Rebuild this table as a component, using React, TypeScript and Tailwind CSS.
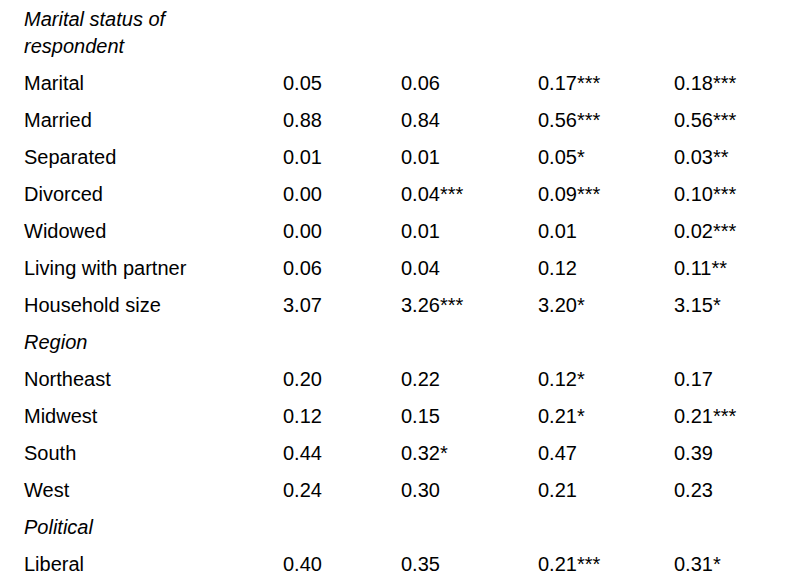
import React from "react";

type Row = { label: string; italic?: boolean; vals?: string[] };

const rows: Row[] = [
  { label: "Marital status of respondent", italic: true },
  { label: "Marital", vals: ["0.05", "0.06", "0.17***", "0.18***"] },
  { label: "Married", vals: ["0.88", "0.84", "0.56***", "0.56***"] },
  { label: "Separated", vals: ["0.01", "0.01", "0.05*", "0.03**"] },
  { label: "Divorced", vals: ["0.00", "0.04***", "0.09***", "0.10***"] },
  { label: "Widowed", vals: ["0.00", "0.01", "0.01", "0.02***"] },
  { label: "Living with partner", vals: ["0.06", "0.04", "0.12", "0.11**"] },
  { label: "Household size", vals: ["3.07", "3.26***", "3.20*", "3.15*"] },
  { label: "Region", italic: true },
  { label: "Northeast", vals: ["0.20", "0.22", "0.12*", "0.17"] },
  { label: "Midwest", vals: ["0.12", "0.15", "0.21*", "0.21***"] },
  { label: "South", vals: ["0.44", "0.32*", "0.47", "0.39"] },
  { label: "West", vals: ["0.24", "0.30", "0.21", "0.23"] },
  { label: "Political", italic: true },
  { label: "Liberal", vals: ["0.40", "0.35", "0.21***", "0.31*"] },
];

export default function App() {
  return (
    <div
      className="w-[793px] h-[576px] overflow-hidden bg-white text-[#000] text-[20px] leading-[27px] pt-[1px]"
      style={{ fontFamily: '"Liberation Sans", Arial, sans-serif' }}
    >
      <div className="grid grid-cols-[259px_118px_137px_136px_1fr] pl-[24px]">
        {rows.map((r, i) => (
          <React.Fragment key={i}>
            <div className={`py-[5px] pr-[70px] ${r.italic ? "italic" : ""}`}>{r.label}</div>
            {[0, 1, 2, 3].map((j) => (
              <div key={j} className="py-[5px]">
                {r.vals ? r.vals[j] : ""}
              </div>
            ))}
          </React.Fragment>
        ))}
      </div>
    </div>
  );
}
